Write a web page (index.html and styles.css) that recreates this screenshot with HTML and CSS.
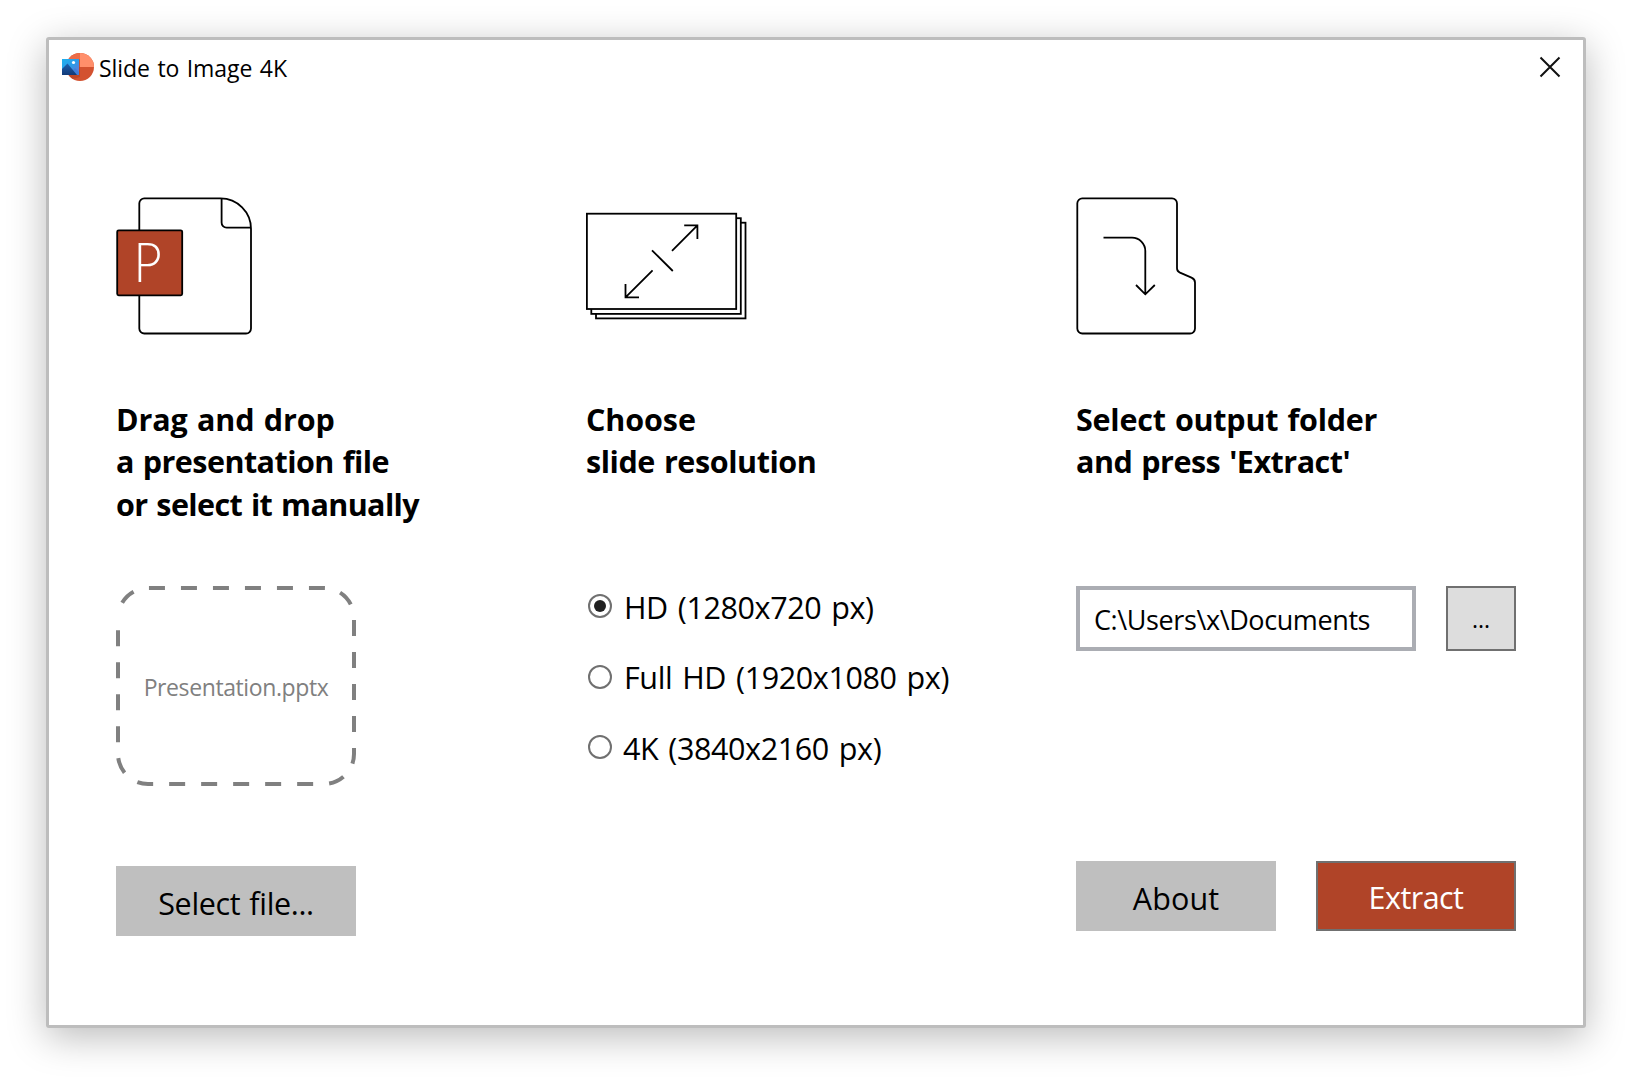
FILE: index.html
```html
<!DOCTYPE html>
<html lang="en">
<head>
<meta charset="utf-8">
<title>Slide to Image 4K</title>
<link rel="stylesheet" href="styles.css">
</head>
<body>
<main class="window">
  <header class="titlebar">
    <svg class="app-icon" width="34" height="32" viewBox="0 0 34 32">
      <defs>
        <linearGradient id="sky" x1="0" y1="0" x2="1" y2="1"><stop offset="0" stop-color="#1fb0ee"/><stop offset=".5" stop-color="#2d9be8"/><stop offset="1" stop-color="#7a6ed0"/></linearGradient>
        <linearGradient id="hill" x1="0" y1="0" x2="0" y2="1"><stop offset="0" stop-color="#1d5fae"/><stop offset="1" stop-color="#123a78"/></linearGradient>
      </defs>
      <circle cx="19" cy="16" r="14" fill="#d35230"/>
      <path d="M19 2v14H5A14 14 0 0 1 19 2z" fill="#ed6c47"/>
      <path d="M19 2a14 14 0 0 1 14 14H19z" fill="#ff8f6b"/>
      <path d="M5.600 20a14 14 0 0 0 6 7.900L19 26V8z" fill="#a83a1e" opacity=".5"/>
      <path d="M1 8h17v16H1z" fill="url(#sky)"/>
      <path d="M8 24l6-7 4 4v3z" fill="#3f7fdc"/>
      <path d="M1 18l5.500-5.500L16 24H1z" fill="url(#hill)"/>
      <circle cx="12.500" cy="11.500" r="1.600" fill="#fff"/>
    </svg>
    <h1 class="title">Slide to Image 4K</h1>
    <button class="close" aria-label="Close">
      <svg width="22" height="22" viewBox="0 0 22 22"><path d="M1.500 1.500l19 19M20.500 1.500l-19 19" fill="none" stroke="#111" stroke-width="2"/></svg>
    </button>
  </header>

  <div class="steps">
    <section class="step">
      <svg class="art" width="140" height="140" viewBox="115 197 140 140">
        <g fill="none" stroke="#000" stroke-width="1.800">
          <path d="M144.500 198.400H220.500A30.500 30.500 0 0 1 251 229V328.500A5 5 0 0 1 246 333.500H144.500A5 5 0 0 1 139.300 328.500V203.500A5 5 0 0 1 144.500 198.400Z"/>
          <path d="M221.600 198.500V222.500A5 5 0 0 0 226.600 227.700H251"/>
          <rect x="117.200" y="230.300" width="65" height="65" rx="1.500" fill="#b04428"/>
        </g>
        <text class="badge" transform="translate(133.600 282) scale(.89 1)">P</text>
      </svg>
      <h2 class="heading"><span class="line drag">Drag and drop</span><span class="line">a presentation file</span><span class="line manual">or select it manually</span></h2>
      <div class="dropzone">
        <svg class="outline" width="240" height="200" viewBox="0 0 240 200"><path d="M2 32A30 30 0 0 1 32 2H208A30 30 0 0 1 238 32V168A30 30 0 0 1 208 198H32A30 30 0 0 1 2 168Z" fill="none" stroke="#808080" stroke-width="4" stroke-dasharray="16 16" stroke-dashoffset="16"/></svg>
        <span class="filename">Presentation.pptx</span>
      </div>
      <button class="button select">Select file...</button>
    </section>

    <section class="step">
      <svg class="art" width="170" height="140" viewBox="585 197 170 140">
        <g fill="#fff" stroke="#000" stroke-width="1.800">
          <rect x="596" y="222.700" width="149.500" height="95.700"/>
          <rect x="591.300" y="218.200" width="149.500" height="95.700"/>
          <rect x="586.900" y="213.700" width="149.300" height="95.300"/>
          <path d="M672 250.800L697.400 225.400M684.200 225.400H697.400V238.900M652 250.300L672.800 271M652.600 270.300L625.500 297.400M625.500 284V297.400H639" fill="none"/>
        </g>
      </svg>
      <h2 class="heading"><span class="line choose">Choose</span><span class="line resolution">slide resolution</span></h2>
      <div class="options">
        <label class="option"><input class="radio" type="radio" name="resolution" checked><span class="label">HD (1280x720 px)</span></label>
        <label class="option"><input class="radio" type="radio" name="resolution"><span class="label">Full HD (1920x1080 px)</span></label>
        <label class="option"><input class="radio" type="radio" name="resolution"><span class="label uhd">4K (3840x2160 px)</span></label>
      </div>
    </section>

    <section class="step">
      <svg class="art" width="130" height="140" viewBox="1075 197 130 140">
        <g fill="none" stroke="#000" stroke-width="1.800">
          <path d="M1082.500 198.400H1172A5 5 0 0 1 1177 203.500V268.200Q1177 271.300 1180 272.700L1191.500 277.700Q1195 279.300 1195 282.500V328.500A5 5 0 0 1 1190 333.500H1082.500A5 5 0 0 1 1077.300 328.500V203.500A5 5 0 0 1 1082.500 198.400Z"/>
          <path d="M1103.500 237.700H1132A13.300 13.300 0 0 1 1145.300 251V294M1136 285L1145.300 294.300L1154.800 285"/>
        </g>
      </svg>
      <h2 class="heading"><span class="line folder">Select output folder</span><span class="line press">and press 'Extract'</span></h2>
      <div class="output">
        <div class="path"><span class="path-text">C:\Users\x\Documents</span></div>
        <button class="button browse"><span class="dots">...</span></button>
      </div>
      <div class="actions">
        <button class="button about">About</button>
        <button class="button extract">Extract</button>
      </div>
    </section>
  </div>
</main>
</body>
</html>
```
FILE: styles.css
```css
* { box-sizing: border-box; }

body {
  margin: 0;
  padding: 37px 46px 54px;
  background: #fff;
  color: #000;
  font-family: "Open Sans", "Noto Sans", sans-serif;
}

.window {
  width: 1540px;
  height: 991px;
  border: 3px solid #bdbdbd;
  border-radius: 3px;
  background: #fff;
  box-shadow: 0 9px 38px rgba(0, 0, 0, .27);
}

.titlebar {
  display: flex;
  align-items: center;
  height: 54px;
  padding: 0 22px 0 12px;
}

.title {
  margin: 2px 0 0 4px;
  font-size: 23px;
  font-weight: 400;
  letter-spacing: -.05px;
  word-spacing: 1.500px;
}

.close {
  display: flex;
  margin-left: auto;
  padding: 0;
  border: 0;
  background: none;
}

.steps {
  display: grid;
  grid-template-columns: 470px 490px 440px;
  padding: 103px 67px 0;
}

.step {
  display: flex;
  flex-direction: column;
  align-items: flex-start;
}

.art {
  flex: none;
  margin-left: -1px;
}

.badge {
  fill: #fff;
  font-family: Lato, sans-serif;
  font-size: 55px;
  font-weight: 300;
}

.heading {
  height: 128px;
  margin: 61px 0 60px;
  font-size: 30.500px;
  font-weight: 700;
  line-height: 42.400px;
  word-spacing: 1.500px;
  white-space: nowrap;
}

.line {
  display: block;
  letter-spacing: -.54px;
}

.drag { letter-spacing: -.11px; }
.manual { letter-spacing: -.61px; }
.choose { letter-spacing: -.1px; }
.resolution { letter-spacing: -.43px; }
.folder { letter-spacing: -.23px; }
.press { letter-spacing: -.49px; }

.dropzone {
  display: grid;
  place-items: center;
  width: 240px;
  height: 200px;
}

.outline,
.filename { grid-area: 1 / 1; }

.filename {
  margin-top: 1px;
  color: #808080;
  font-size: 23px;
  letter-spacing: -.4px;
}

.button {
  display: flex;
  align-items: center;
  justify-content: center;
  height: 70px;
  padding: 0;
  border: 0;
  background: #bfbfbf;
  color: #000;
  font: 400 30.500px "Open Sans", "Noto Sans", sans-serif;
}

.select {
  width: 240px;
  margin-top: 80px;
  padding-top: 4px;
  letter-spacing: -.35px;
  word-spacing: 1.500px;
}

.options {
  display: flex;
  flex-direction: column;
  margin-left: 2px;
}

.option {
  display: flex;
  align-items: center;
  gap: 12px;
  height: 70.500px;
  margin-top: -15px;
  margin-bottom: 15px;
}

.radio {
  display: grid;
  place-items: center;
  width: 24px;
  height: 24px;
  margin: 0;
  border: 2px solid #707070;
  border-radius: 50%;
  appearance: none;
}

.radio:checked::before {
  width: 12px;
  height: 12px;
  border-radius: 50%;
  background: #212121;
  content: "";
}

.label {
  margin-top: 1px;
  font-size: 30.500px;
  letter-spacing: -.4px;
  word-spacing: 2.500px;
  white-space: nowrap;
}

.uhd { margin-left: -1px; }

.output,
.actions {
  display: flex;
  justify-content: space-between;
  width: 440px;
}

.path {
  display: flex;
  align-items: center;
  width: 340px;
  height: 65px;
  padding-left: 14px;
  border: 4px solid #abadb3;
}

.path-text {
  margin-top: 1px;
  font-size: 27px;
  letter-spacing: -.4px;
}

.browse {
  width: 70px;
  height: 65px;
  border: 2px solid #707070;
  background: #ddd;
  font-size: 23px;
}

.actions { margin-top: 210px; }

.about,
.extract {
  width: 200px;
  padding-top: 3px;
}

.about { letter-spacing: .1px; }

.extract {
  padding-top: 1px;
  border: 2px solid #707070;
  background: #b04428;
  color: #fff;
  letter-spacing: -.55px;
}
```
